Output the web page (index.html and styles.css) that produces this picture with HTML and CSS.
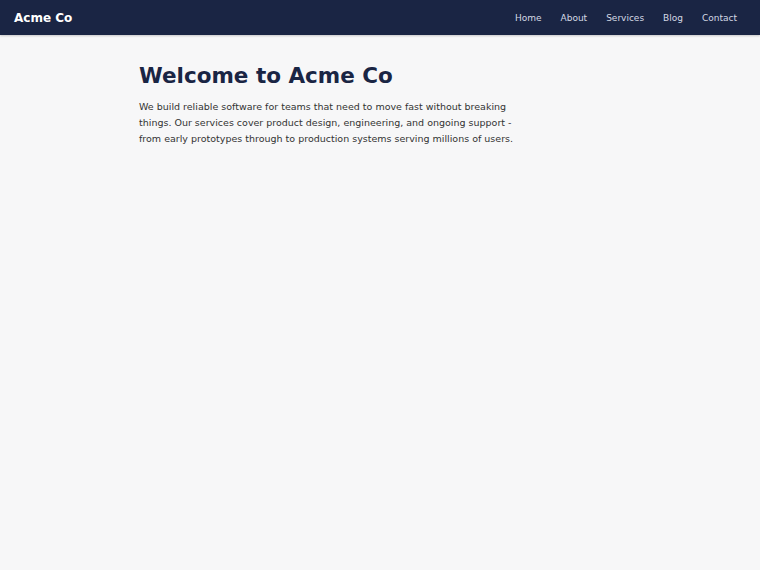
FILE: index.html
```html
<!DOCTYPE html>
<html>
<head>
  <meta charset="UTF-8">
  <title>Acme Co</title>
  <link rel="stylesheet" href="styles.css">
</head>
<body>
  <header class="topbar">
    <div class="brand">Acme Co</div>
    <nav class="nav">
      <a href="#">Home</a>
      <a href="#">About</a>
      <a href="#">Services</a>
      <a href="#">Blog</a>
      <a href="#">Contact</a>
    </nav>
  </header>
  <main class="page">
    <h1>Welcome to Acme Co</h1>
    <p>We build reliable software for teams that need to move fast without breaking things. Our services cover product design, engineering, and ongoing support - from early prototypes through to production systems serving millions of users.</p>
  </main>
</body>
</html>
```

FILE: styles.css
```css
html, body {
  margin: 0;
  padding: 0;
  height: 100%;
  font-family: 'DejaVu Sans', sans-serif;
  background: #f7f7f8;
  color: #333;
}
.topbar {
  height: 35px;
  display: flex;
  align-items: center;
  justify-content: space-between;
  padding: 0 23px 0 14px;
  background: #1a2544;
  box-shadow: 0 1px 2px rgba(0, 0, 0, 0.2); /* soft edge under the bar */
}
.brand {
  font-size: 12px;
  font-weight: bold;
  color: #fff;
}
.nav {
  display: flex;
  gap: 19px;
}
.nav a {
  font-size: 9px;
  color: #d4d9e4;
  text-decoration: none;
}
.page {
  max-width: 482px;
  margin: 0 auto;
  padding: 28px 0;
}
.page h1 {
  margin: 0 0 10.5px;
  font-size: 21.5px;
  color: #1a2544;
}
/* keep the intro to a readable measure */
.page p {
  max-width: 390px;
  margin: 0;
  font-size: 9.5px;
  line-height: 16px;
  color: #333;
}
```
